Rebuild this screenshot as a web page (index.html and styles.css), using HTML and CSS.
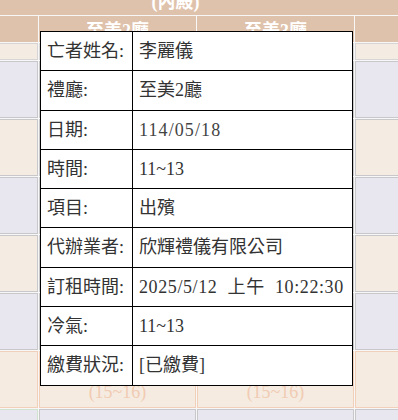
FILE: index.html
```html
<!DOCTYPE html>
<html lang="zh-Hant">
<head>
    <meta charset="UTF-8">
    <meta name="viewport" content="width=device-width, initial-scale=1.0">
    <title>禮廳租用</title>
    <link rel="stylesheet" href="styles.css">
</head>
<body>
    <div class="board">
        <div class="head head-top">(內殿)</div>

        <div class="head"></div>
        <div class="head">至美2廳</div>
        <div class="head">至美3廳</div>
        <div class="head"></div>

        <div class="strip"></div>
        <div class="strip"></div>
        <div class="strip"></div>
        <div class="strip"></div>

        <div class="slot slot-free"></div>
        <div class="slot slot-free"></div>
        <div class="slot slot-free"></div>
        <div class="slot slot-free"></div>

        <div class="slot"></div>
        <div class="slot"></div>
        <div class="slot"></div>
        <div class="slot"></div>

        <div class="slot slot-free"></div>
        <div class="slot slot-free"></div>
        <div class="slot slot-free"></div>
        <div class="slot slot-free"></div>

        <div class="slot"></div>
        <div class="slot"></div>
        <div class="slot"></div>
        <div class="slot"></div>

        <div class="slot slot-free"></div>
        <div class="slot slot-free"></div>
        <div class="slot slot-free"></div>
        <div class="slot slot-free"></div>

        <div class="slot slot-booked"></div>
        <div class="slot slot-booked"><span>(15~16)</span></div>
        <div class="slot slot-booked"><span>(15~16)</span></div>
        <div class="slot slot-booked"></div>

        <div class="slot slot-free slot-green"></div>
        <div class="slot slot-free"></div>
        <div class="slot slot-free"></div>
        <div class="slot slot-free"></div>
    </div>

    <table class="detail">
        <tr><td class="label">亡者姓名:</td><td>李麗儀</td></tr>
        <tr><td class="label">禮廳:</td><td>至美2廳</td></tr>
        <tr><td class="label">日期:</td><td><span class="date">114/05/18</span></td></tr>
        <tr><td class="label">時間:</td><td>11~13</td></tr>
        <tr><td class="label">項目:</td><td>出殯</td></tr>
        <tr><td class="label">代辦業者:</td><td>欣輝禮儀有限公司</td></tr>
        <tr><td class="label">訂租時間:</td><td><span class="stamp">2025/5/12&nbsp; 上午&nbsp; 10:22:30</span></td></tr>
        <tr><td class="label">冷氣:</td><td>11~13</td></tr>
        <tr><td class="label">繳費狀況:</td><td>[已繳費]</td></tr>
    </table>
</body>
</html>
```

FILE: styles.css
```css
body {
    margin: 0;
    padding: 0;
    background-color: #fff;
    font-family: 'Liberation Serif', 'Noto Sans CJK TC', serif;
    font-size: 18px;
    color: #333;
    overflow: hidden;
    position: relative;
    height: 420px;
}

.board {
    display: grid;
    grid-template-columns: 58px 157px 157px 100px;
    grid-template-rows: 30px 26px 17px repeat(7, 57px);
    gap: 1px;
    margin-top: -15px;
    margin-left: -20px;
    width: 480px;
    background-color: #f7f7f7;
}

.head {
    background-color: #dfc2ab;
    color: #fff;
    font-weight: bold;
    display: flex;
    align-items: center;
    justify-content: center;
}

.head-top {
    grid-column: 1 / -1;
    padding-right: 84px;
}

.strip {
    background-color: #f4ece3;
    border: 1px solid #d6d4d4;
}

.slot {
    background-color: #f4ece3;
    border: 1px solid #c8c8cb;
}

.slot-free {
    background-color: #e8e6ee;
}

.slot-booked {
    background-color: #f5ebe1;
    border-color: #f2cfb8;
    display: flex;
    align-items: flex-end;
    justify-content: center;
    padding-bottom: 4px;
    color: #f1cbb3;
}

.slot-green {
    border-color: #cfe3cf;
}

.detail {
    position: absolute;
    left: 40px;
    top: 31px;
    width: 313px;
    border-collapse: collapse;
    border: 1px solid #000;
    background-color: #fff;
}

.detail td {
    border: 1px solid #000;
    padding: 6px 6px 6px 6px;
    line-height: 26.3px;
    white-space: nowrap;
}

.detail .label {
    width: 79px;
}

.date {
    letter-spacing: 1.1px;
    color: #444;
}

.stamp {
    letter-spacing: 0.6px;
}
```
